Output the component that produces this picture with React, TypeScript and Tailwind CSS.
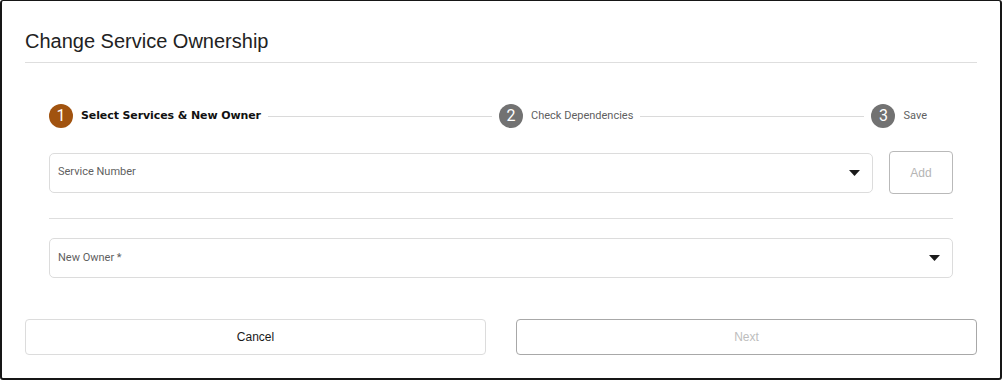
import { Fragment } from 'react';

const steps = [
  { label: 'Select Services & New Owner', active: true },
  { label: 'Check Dependencies', active: false },
  { label: 'Save', active: false },
];

const Caret = () => (
  <svg width="11" height="6" viewBox="0 0 11 6" className="shrink-0">
    <path d="M0 0h11L5.5 6z" fill="#1a1a1a" />
  </svg>
);

const SelectField = ({ label }: { label: string }) => (
  <div className="flex-1 h-[40px] flex items-center justify-between pl-[8px] pr-[12px] border border-[#dcdcdc] rounded-[5px] bg-white">
    <span className="text-[11px] text-[#5f5f5f] font-['Roboto',sans-serif]">{label}</span>
    <Caret />
  </div>
);

const Stepper = () => (
  <div className="flex items-center pr-[26px]">
    {steps.map((step, i) => (
      <Fragment key={step.label}>
        {i > 0 && <div className="flex-1 h-px bg-[#dadada] mx-[7px]" />}
        <div className="flex items-center gap-[8px]">
          <div
            className={
              step.active
                ? 'w-[24px] h-[24px] rounded-full bg-[#a1530f] text-white flex items-center justify-center text-[16px] font-["Roboto",sans-serif]'
                : 'w-[24px] h-[24px] rounded-full bg-[#727272] text-white flex items-center justify-center text-[16px] font-["Roboto",sans-serif]'
            }
          >
            {i + 1}
          </div>
          <span
            className={
              step.active
                ? 'text-[11px] font-bold text-[#111] tracking-[-0.1px] font-["DejaVu_Sans",sans-serif]'
                : 'text-[11px] text-[#5f5f5f] font-["Roboto",sans-serif]'
            }
          >
            {step.label}
          </span>
        </div>
      </Fragment>
    ))}
  </div>
);

export default function App() {
  return (
    <div className="w-[1002px] h-[380px] bg-white border-t border-l-2 border-r-2 border-b-2 border-[#161616] rounded-[3px] font-['Liberation_Sans',Arial,sans-serif]">
      <div className="px-[23px] pt-[28px]">
        <h1 className="text-[20px] leading-[24px] text-[#222]">Change Service Ownership</h1>
        <div className="h-px bg-[#dedede] mt-[9px]" />

        <div className="px-[24px] pt-[41px]">
          <Stepper />

          <div className="flex items-center gap-[16px] mt-[23px]">
            <SelectField label="Service Number" />
            <button className="w-[64px] h-[43px] border border-[#b9b9b9] rounded-[4px] text-[12px] text-[#b5b5b5] bg-white">
              Add
            </button>
          </div>

          <div className="h-px bg-[#dedede] mt-[24px]" />

          <div className="flex mt-[19px]">
            <SelectField label="New Owner *" />
          </div>
        </div>

        <div className="flex gap-[30px] mt-[41px]">
          <button className="flex-1 h-[36px] border border-[#dcdcdc] rounded-[4px] text-[12px] text-[#1a1a1a] bg-white">
            Cancel
          </button>
          <button className="flex-1 h-[36px] border border-[#a8a8a8] rounded-[4px] text-[12px] text-[#bdbdbd] bg-white">
            Next
          </button>
        </div>
      </div>
    </div>
  );
}
